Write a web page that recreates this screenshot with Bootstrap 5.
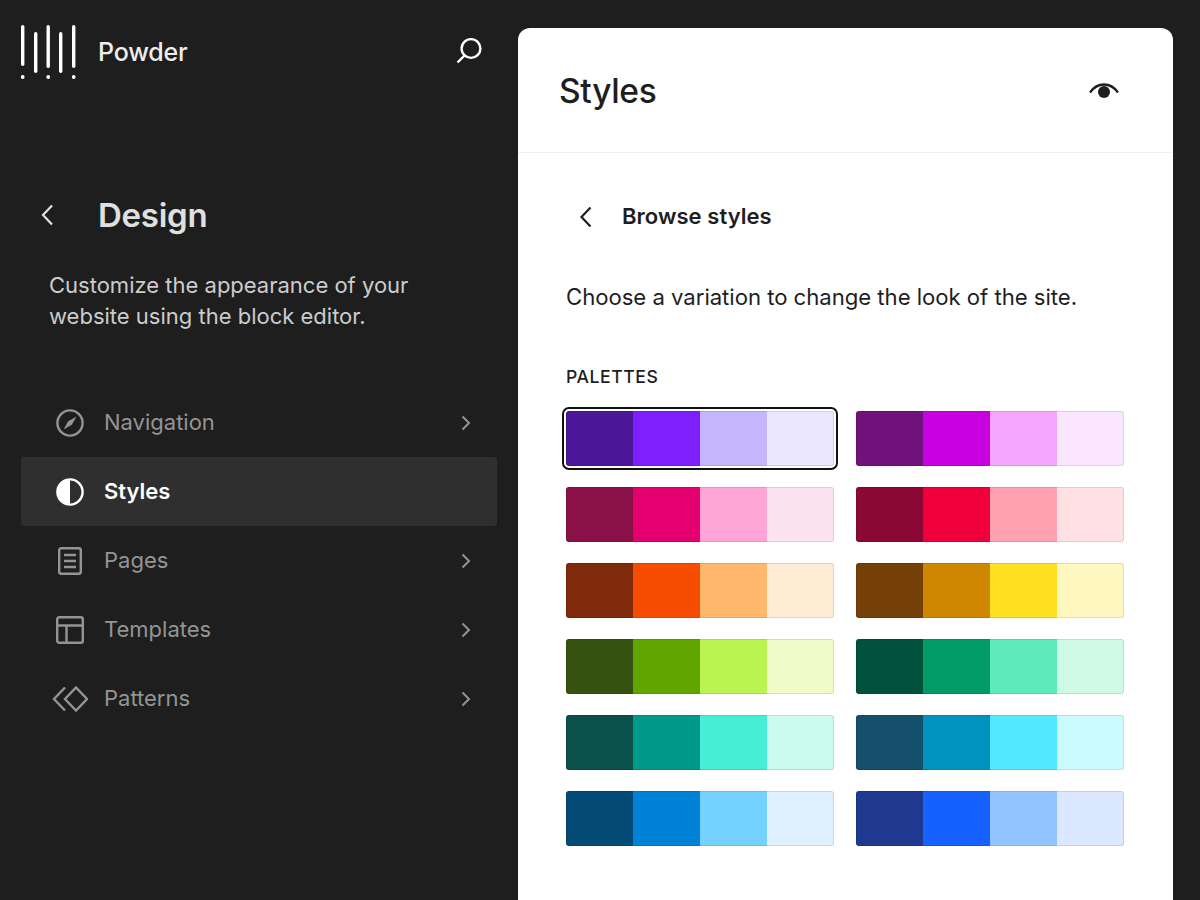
<!DOCTYPE html>
<html lang="en"><head><meta charset="utf-8"><title>Design</title>
<link href="https://cdn.jsdelivr.net/npm/bootstrap@5.3.0/dist/css/bootstrap.min.css" rel="stylesheet">
<style>
html,body{height:900px;overflow:hidden}
body{background:#1e1e1e;font-family:Inter,"Liberation Sans",sans-serif;color:#1e1e1e}
.shell{height:900px}
.side{width:518px;flex:none;padding:21px 21px 0 21px}
.brandrow{height:60px;padding-right:13px}
.brandname{font-size:25px;font-weight:500;color:#eee;margin-left:20px;letter-spacing:-.2px;line-height:29px;margin-top:3px}
.backrow{margin-top:112px;height:44px;padding-left:20px}
.dtitle{font-size:33px;font-weight:600;color:#e0e0e0;margin:0 0 0 44px;letter-spacing:-.25px;line-height:38px}
.ddesc{font-size:22px;line-height:31px;color:#ccc;margin:33px 0 0 28px;letter-spacing:0}
.menu{margin-top:56px;gap:0}
.mitem{height:69px;padding:0 26px 0 30px;color:#949494;font-size:22px;border-radius:3px}
.mitem.on{background:#2f2f2f;color:#fff;font-weight:600}
.mico{width:36px;height:36px;flex:none;margin-left:.5px;margin-right:16.5px}
.mlabel{flex:1}
.panel{width:655px;flex:none;margin-top:28px;background:#fff;border-radius:12px 12px 0 0;height:872px}
.phead{height:125px;padding:2px 54px 0 41px;border-bottom:1px solid #f0f0f0}
.ptitle{font-size:33.5px;font-weight:500;margin:0;letter-spacing:-.3px;color:#1e1e1e}
.pbody{padding:40px 49px 0 48px}
.subhead{height:47px}
.subback{margin-left:13px}
.subname{font-size:22px;font-weight:600;margin:0 0 0 29px;letter-spacing:.05px}
.pdesc{font-size:22.15px;margin:41px 0 0 0;line-height:32px;letter-spacing:-.03px;color:#1e1e1e}
.plabel{font-size:17.6px;font-weight:500;margin:52px 0 0 0;line-height:24px;letter-spacing:.55px}
.palgrid{display:grid;grid-template-columns:268px 268px;column-gap:22px;row-gap:21px;margin-top:22px}
.pal{height:55px;display:flex;border-radius:3px;position:relative}
.pal i{flex:1;display:block}
.pal i:first-child{border-radius:3px 0 0 3px}
.pal i:last-child{border-radius:0 3px 3px 0}
.pal::after{content:"";position:absolute;inset:0;border-radius:3px;box-shadow:inset 0 0 0 1px rgba(0,0,0,.1)}
.pal.sel::before{content:"";position:absolute;inset:-4px;border:2.6px solid #111;border-radius:7px}
.c1{background:#4c1698}.c2{background:#7f1fff}.c3{background:#c4b5ff}.c4{background:#ebe7ff}
.c5{background:#70127a}.c6{background:#c900e0}.c7{background:#f5a6ff}.c8{background:#fae6ff}
.c9{background:#8a1147}.c10{background:#e6006f}.c11{background:#ffa6d6}.c12{background:#fbe4f0}
.c13{background:#8c0834}.c14{background:#ef003c}.c15{background:#ffa3b2}.c16{background:#ffe0e3}
.c17{background:#7f2b0b}.c18{background:#f74d00}.c19{background:#ffb86e}.c20{background:#feecd4}
.c21{background:#753f08}.c22{background:#cf8600}.c23{background:#ffe020}.c24{background:#fef7c0}
.c25{background:#365210}.c26{background:#61a600}.c27{background:#bbf452}.c28{background:#effbc8}
.c29{background:#00523d}.c30{background:#009b66}.c31{background:#5eebbb}.c32{background:#cffae6}
.c33{background:#0a514b}.c34{background:#00998a}.c35{background:#45efd6}.c36{background:#cbfaee}
.c37{background:#14506c}.c38{background:#0093bf}.c39{background:#52e8ff}.c40{background:#ccfbff}
.c41{background:#034a77}.c42{background:#0082d6}.c43{background:#75d2ff}.c44{background:#dff0ff}
.c45{background:#1e398f}.c46{background:#1661ff}.c47{background:#94c4ff}.c48{background:#dbe8ff}
</style></head>
<body>
<div class="shell d-flex">
<aside class="side d-flex flex-column">
<div class="brandrow d-flex align-items-center">
<svg width="57" height="60" viewBox="0 0 57 60" fill="#fff"><rect x="0" y="4" width="3.4" height="41" rx="1.7"/><rect x="13" y="11" width="3.4" height="41" rx="1.7"/><rect x="25.5" y="4" width="3.4" height="43" rx="1.7"/><rect x="38" y="11" width="3.4" height="41" rx="1.7"/><rect x="51" y="4" width="3.4" height="43" rx="1.7"/><circle cx="1.7" cy="56" r="1.9"/><circle cx="27.2" cy="56" r="1.9"/><circle cx="52.7" cy="56" r="1.9"/></svg>
<div class="brandname flex-grow-1">Powder</div>
<svg width="30" height="30" viewBox="0 0 30 30" fill="none" stroke="#fff" stroke-width="2.4"><circle cx="17" cy="12.5" r="9.4"/><path d="M10.5 19.5 3.5 26.5"/></svg>
</div>
<div class="backrow d-flex align-items-center">
<svg width="13" height="22" viewBox="0 0 13 22" fill="none" stroke="#e0e0e0" stroke-width="2.2"><path d="M11 1.5 2 11l9 9.5"/></svg>
<h1 class="dtitle">Design</h1>
</div>
<p class="ddesc">Customize the appearance of your<br>website using the block editor.</p>
<nav class="menu d-flex flex-column">
<div class="mitem d-flex align-items-center">
<svg class="mico" viewBox="0 0 36 36" fill="none" stroke="#949494" stroke-width="2.4"><circle cx="18" cy="18" r="12.6"/><path d="M24.5 11.5 19.8 19.8 11.5 24.5 16.2 16.2Z" fill="#949494" stroke="none"/></svg>
<span class="mlabel">Navigation</span>
<svg width="10" height="16" viewBox="0 0 10 16" fill="none" stroke="#949494" stroke-width="2"><path d="M1.5 1.5 8 8l-6.5 6.5"/></svg>
</div>
<div class="mitem on d-flex align-items-center">
<svg class="mico" viewBox="0 0 36 36"><circle cx="18" cy="18" r="12.6" fill="none" stroke="#fff" stroke-width="2.4"/><path d="M18 5.4a12.6 12.6 0 0 0 0 25.2Z" fill="#fff"/></svg>
<span class="mlabel">Styles</span>
</div>
<div class="mitem d-flex align-items-center">
<svg class="mico" viewBox="0 0 36 36" fill="none" stroke="#949494" stroke-width="2.4"><rect x="7.2" y="5.2" width="21.6" height="25.6" rx="2"/><path d="M12 12h12M12 18h12M12 24h12"/></svg>
<span class="mlabel">Pages</span>
<svg width="10" height="16" viewBox="0 0 10 16" fill="none" stroke="#949494" stroke-width="2"><path d="M1.5 1.5 8 8l-6.5 6.5"/></svg>
</div>
<div class="mitem d-flex align-items-center">
<svg class="mico" viewBox="0 0 36 36" fill="none" stroke="#949494" stroke-width="2.4"><rect x="5.2" y="5.2" width="25.6" height="25.6" rx="2"/><path d="M5.2 13.5h25.6M14.5 13.5v17.3"/></svg>
<span class="mlabel">Templates</span>
<svg width="10" height="16" viewBox="0 0 10 16" fill="none" stroke="#949494" stroke-width="2"><path d="M1.5 1.5 8 8l-6.5 6.5"/></svg>
</div>
<div class="mitem d-flex align-items-center">
<svg class="mico" viewBox="0 0 36 36" fill="none" stroke="#949494" stroke-width="2.4"><path d="M13 6.5 2 18l11 11.5"/><path d="M24 6.5 35 18 24 29.500 13 18Z"/></svg>
<span class="mlabel">Patterns</span>
<svg width="10" height="16" viewBox="0 0 10 16" fill="none" stroke="#949494" stroke-width="2"><path d="M1.5 1.5 8 8l-6.5 6.5"/></svg>
</div>
</nav>
</aside>
<main class="panel">
<header class="phead d-flex align-items-center justify-content-between">
<h2 class="ptitle">Styles</h2>
<svg width="30" height="18" viewBox="0 0 30 18"><path d="M1 10.5C4.5 5.5 9.5 2.5 15 2.5s10.5 3 14 8" fill="none" stroke="#1e1e1e" stroke-width="2.3"/><circle cx="15" cy="10" r="6" fill="#1e1e1e"/></svg>
</header>
<div class="pbody">
<div class="subhead d-flex align-items-center">
<svg width="14" height="22" viewBox="0 0 14 22" fill="none" stroke="#1e1e1e" stroke-width="2.2" class="subback"><path d="M11.5 1.5 2.5 11l9 9.5"/></svg>
<h3 class="subname">Browse styles</h3>
</div>
<p class="pdesc">Choose a variation to change the look of the site.</p>
<p class="plabel">PALETTES</p>
<div class="palgrid">
<div class="pal sel"><i class="c1"></i><i class="c2"></i><i class="c3"></i><i class="c4"></i></div>
<div class="pal"><i class="c5"></i><i class="c6"></i><i class="c7"></i><i class="c8"></i></div>
<div class="pal"><i class="c9"></i><i class="c10"></i><i class="c11"></i><i class="c12"></i></div>
<div class="pal"><i class="c13"></i><i class="c14"></i><i class="c15"></i><i class="c16"></i></div>
<div class="pal"><i class="c17"></i><i class="c18"></i><i class="c19"></i><i class="c20"></i></div>
<div class="pal"><i class="c21"></i><i class="c22"></i><i class="c23"></i><i class="c24"></i></div>
<div class="pal"><i class="c25"></i><i class="c26"></i><i class="c27"></i><i class="c28"></i></div>
<div class="pal"><i class="c29"></i><i class="c30"></i><i class="c31"></i><i class="c32"></i></div>
<div class="pal"><i class="c33"></i><i class="c34"></i><i class="c35"></i><i class="c36"></i></div>
<div class="pal"><i class="c37"></i><i class="c38"></i><i class="c39"></i><i class="c40"></i></div>
<div class="pal"><i class="c41"></i><i class="c42"></i><i class="c43"></i><i class="c44"></i></div>
<div class="pal"><i class="c45"></i><i class="c46"></i><i class="c47"></i><i class="c48"></i></div>
</div>
</div>
</main>
</div>
<script src="https://cdn.jsdelivr.net/npm/bootstrap@5.3.0/dist/js/bootstrap.bundle.min.js"></script>
</body></html>
